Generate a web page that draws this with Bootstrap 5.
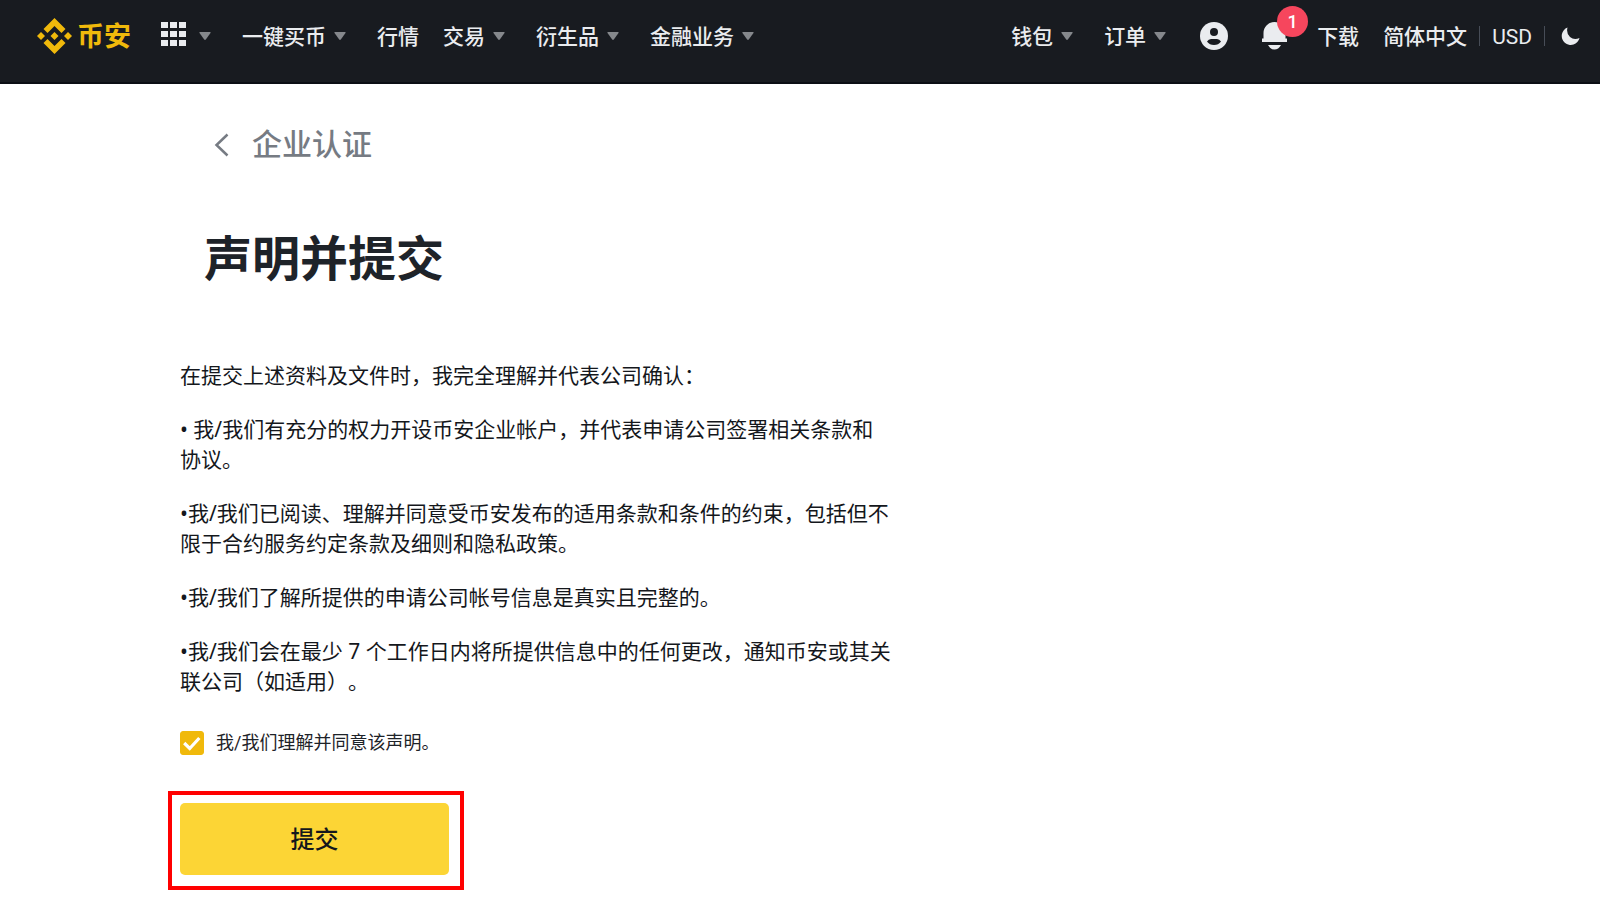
<!DOCTYPE html>
<html lang="zh-CN">
<head>
<meta charset="utf-8">
<meta name="viewport" content="width=device-width, initial-scale=1">
<title>企业认证</title>
<link href="https://cdn.jsdelivr.net/npm/bootstrap@5.3.0/dist/css/bootstrap.min.css" rel="stylesheet">
<style>
  body { font-family: Roboto, "Noto Sans CJK SC", sans-serif; font-size: 21px; line-height: 30px; color: #1e2329; background: #fff; text-spacing-trim: space-all; }
  .top-bar { background: #181b20; border-bottom: 2px solid #0b0e14; padding: 0 20px 10px 37px; color: #eaecef; font-weight: 500; white-space: nowrap; }
  .top-row { min-height: 72px; }
  .top-bar a { color: inherit; text-decoration: none; }
  .top-bar .brand { color: #f0b90b; font-size: 27px; font-weight: 700; gap: 5px; margin-right: 30px; }
  .brand span { padding-top: 2px; }
  .menu-item { display: flex; align-items: center; gap: 8px; margin-right: 31px; }
  .menu-item.plain { margin-right: 24px; }
  .menu-text { padding-top: 2px; }
  .caret { width: 12px; height: 8px; fill: #85888c; }
  .top-sep { width: 1px; height: 20px; background: #474d57; margin: 0 12px; }
  .account { margin-left: 3px; margin-right: 31px; }
  .bell { margin-left: 3px; margin-right: 30px; }
  .currency { font-weight: 400; }
  .count { position: absolute; left: 15px; top: -16px; width: 31px; height: 31px; border-radius: 50%; background: #f6465d; color: #fff; font-size: 18px; line-height: 31px; text-align: center; }
  main { padding: 40px 24px 32px 180px; }
  .back { color: #767b83; font-size: 30px; line-height: 40px; font-weight: 500; gap: 23px; padding-left: 34px; }
  .back span { padding-top: 1px; }
  .page-title { font-size: 48px; line-height: 60px; font-weight: 700; margin: 65px 0 70px 24px; }
  .terms { font-family: "Noto Sans", "Noto Sans CJK SC", sans-serif; max-width: 712px; color: #14171c; }
  .terms p { margin-bottom: 24px; }
  .agree { font-size: 18px; line-height: 24px; gap: 12px; margin: 35px 0 36px; }
  .agree .form-check-input { width: 24px; height: 24px; margin: 0; border-radius: 3px; }
  .agree .form-check-input:checked { background-color: #f0b90b; border-color: #f0b90b; background-image: url("data:image/svg+xml,%3Csvg xmlns='http://www.w3.org/2000/svg' viewBox='0 0 24 24'%3E%3Cpath d='M3.500 12l6 6L20 6.500' fill='none' stroke='%23fff' stroke-width='3.500'/%3E%3C/svg%3E"); }
  .marked { display: inline-block; border: 4px solid #f00; padding: 8px 11px 11px 8px; margin-left: -12px; }
  .marked .submit { width: 269px; height: 72px; border-radius: 5px; border: 0; padding: 8px 0 6px; background: #fcd535; color: #14171c; font-size: 24px; font-weight: 500; }
</style>
</head>
<body>
<svg class="d-none" aria-hidden="true"><symbol id="caret" viewBox="0 0 12 8"><path d="M1 0h10q1 .2.5 1L6.800 7.500q-.8.800-1.600 0L.5 1Q0 .2 1 0z"/></symbol></svg>
<header class="top-bar">
  <nav class="top-row d-flex align-items-center justify-content-between">
    <div class="d-flex align-items-center">
      <a class="brand d-flex align-items-center" href="#">
        <svg width="35" height="36" viewBox="0 0 35 36" fill="#f0b90b"><path d="M17.500 0L28.500 11l-4 4-7-7-7 7-4-4zM17.500 36l-11-11 4-4 7 7 7-7 4 4zM4 14l4 4-4 4-4-4zM31 14l4 4-4 4-4-4zM17.500 14l4 4-4 4-4-4z"/></svg>
        <span>币安</span>
      </a>
      <a class="menu-item" href="#" aria-label="更多产品">
        <svg class="me-1" width="26" height="28" viewBox="0 0 26 28" fill="#eaecef"><path d="M0 0h7v6H0zM9 0h7v6H9zM18 0h7v6h-7zM0 9h7v6H0zM9 9h7v6H9zM18 9h7v6h-7zM0 18h7v6H0zM9 18h7v6H9zM18 18h7v6h-7z"/></svg>
        <svg class="caret"><use href="#caret"/></svg>
      </a>
      <a class="menu-item" href="#"><span class="menu-text">一键买币</span><svg class="caret"><use href="#caret"/></svg></a>
      <a class="menu-item plain" href="#"><span class="menu-text">行情</span></a>
      <a class="menu-item" href="#"><span class="menu-text">交易</span><svg class="caret"><use href="#caret"/></svg></a>
      <a class="menu-item" href="#"><span class="menu-text">衍生品</span><svg class="caret"><use href="#caret"/></svg></a>
      <a class="menu-item" href="#"><span class="menu-text">金融业务</span><svg class="caret"><use href="#caret"/></svg></a>
    </div>
    <div class="d-flex align-items-center">
      <a class="menu-item" href="#"><span class="menu-text">钱包</span><svg class="caret"><use href="#caret"/></svg></a>
      <a class="menu-item" href="#"><span class="menu-text">订单</span><svg class="caret"><use href="#caret"/></svg></a>
      <a class="account d-flex" href="#" aria-label="账户">
        <svg width="28" height="28" viewBox="0 0 28 28"><circle cx="14" cy="14" r="14" fill="#eaecef"/><circle cx="14" cy="10" r="4" fill="#181b20"/><path d="M7 19.500q1.500-2.500 4-2.500h6q2.500 0 4 2.500-2.500 3.500-7 3.500t-7-3.500z" fill="#181b20"/></svg>
      </a>
      <a class="bell d-flex position-relative" href="#" aria-label="通知">
        <svg width="25" height="28" viewBox="0 0 25 28" fill="#eaecef"><path d="M0 20v-3.500h1.500V11a11 11 0 0 1 22 0v5.500H25V20zM6 23h13q-2.500 4.500-6.500 4.500T6 23z"/></svg>
        <span class="count">1</span>
      </a>
      <a class="menu-item plain" href="#"><span class="menu-text">下载</span></a>
      <a class="menu-text" href="#">简体中文</a>
      <span class="top-sep"></span>
      <a class="menu-text currency" href="#">USD</a>
      <span class="top-sep"></span>
      <a class="d-flex ms-1" href="#" aria-label="深色模式">
        <svg width="19" height="19" viewBox="0 0 19 19" fill="#eaecef"><path d="M6.500.5A9 9 0 1 0 18.500 11Q13 13.500 9 10T6.500.5z"/></svg>
      </a>
    </div>
  </nav>
</header>
<main>
  <a class="back d-flex align-items-center text-decoration-none" href="#">
    <svg width="15" height="24" viewBox="0 0 15 24" fill="none" stroke="currentColor" stroke-width="2.500"><path d="M13.500 1.500L2.500 12l11 10.500"/></svg>
    <span>企业认证</span>
  </a>
  <h1 class="page-title">声明并提交</h1>
  <form>
    <div class="terms">
      <p>在提交上述资料及文件时，我完全理解并代表公司确认：</p>
      <p>• 我/我们有充分的权力开设币安企业帐户，并代表申请公司签署相关条款和协议。</p>
      <p>•我/我们已阅读、理解并同意受币安发布的适用条款和条件的约束，包括但不限于合约服务约定条款及细则和隐私政策。</p>
      <p>•我/我们了解所提供的申请公司帐号信息是真实且完整的。</p>
      <p>•我/我们会在最少 7 个工作日内将所提供信息中的任何更改，通知币安或其关联公司（如适用）。</p>
    </div>
    <div class="agree d-flex align-items-center">
      <input class="form-check-input" type="checkbox" id="agree" checked>
      <label for="agree">我/我们理解并同意该声明。</label>
    </div>
    <div class="marked"><button class="submit btn d-block" type="button">提交</button></div>
  </form>
</main>
<script src="https://cdn.jsdelivr.net/npm/bootstrap@5.3.0/dist/js/bootstrap.bundle.min.js"></script>
</body>
</html>
